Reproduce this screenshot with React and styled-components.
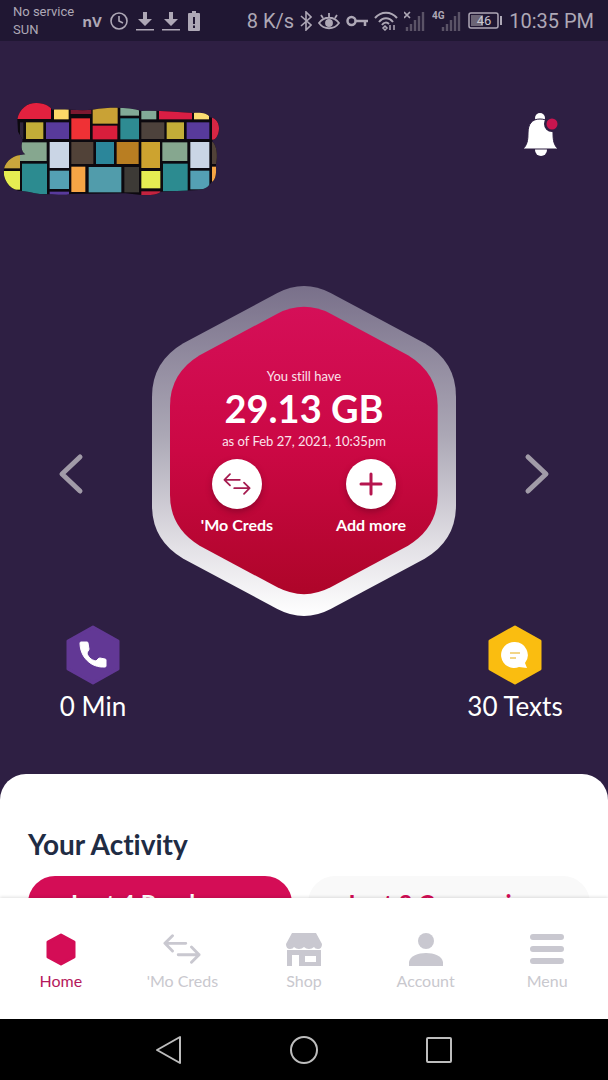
import styled, { createGlobalStyle } from "styled-components";

const GlobalStyle = createGlobalStyle`
  * {
    box-sizing: border-box;
  }

  body {
    margin: 0;
    background: #2e1f43;
    font-family: Lato, "Open Sans", sans-serif;
    font-variant-ligatures: none;
  }

  button {
    border: 0;
    padding: 0;
    background: none;
    color: inherit;
    font: inherit;
    cursor: pointer;
  }

  svg {
    display: block;
    flex-shrink: 0;
  }
`;

const Screen = styled.div`
  display: flex;
  flex-direction: column;
  height: 100vh;
`;

const StatusBar = styled.header`
  display: flex;
  align-items: center;
  justify-content: space-between;
  height: 41px;
  padding: 0 14px 0 13px;
  background: #201733;
  color: #aea8b6;
  font-family: Roboto, sans-serif;
  font-size: 20px;
  white-space: nowrap;
`;

const StatusGroup = styled.div`
  display: flex;
  align-items: center;
  gap: ${(props) => props.$gap}px;
`;

const Carrier = styled.div`
  font-size: 13px;
  line-height: 18px;
`;

const AppBadge = styled.span`
  font-family: "Open Sans", sans-serif;
  font-size: 15px;
  font-weight: 700;
`;

const Content = styled.main`
  flex: 1;
  min-height: 0;
  display: flex;
  flex-direction: column;
  overflow-y: auto;
  scrollbar-width: none;
`;

const TopBar = styled.div`
  display: flex;
  justify-content: space-between;
  align-items: flex-start;
  padding: 54px 48px 0 0;
`;

const BellButton = styled.button`
  margin-top: 16px;
`;

const Carousel = styled.section`
  display: flex;
  align-items: center;
  justify-content: space-between;
  padding: 86px 58px 0;
`;

const ArrowButton = styled.button`
  padding-top: 46px;
`;

const Balance = styled.div`
  display: grid;
  justify-items: center;

  > * {
    grid-area: 1 / 1;
  }
`;

const BalanceInfo = styled.div`
  display: flex;
  flex-direction: column;
  align-items: center;
  padding-top: 80px;
  color: #fff;
`;

const Caption = styled.div`
  font-size: 13px;
  line-height: 20px;
  color: #fbe3ec;
`;

const Amount = styled.div`
  font-size: 38px;
  font-weight: 700;
  line-height: 45px;
`;

const Actions = styled.div`
  display: grid;
  grid-template-columns: 134px 134px;
  margin-top: 8px;
`;

const Action = styled.button`
  display: flex;
  flex-direction: column;
  align-items: center;
  gap: 6px;
  font-size: 16px;
  font-weight: 700;
  line-height: 20px;
`;

const ActionCircle = styled.span`
  display: flex;
  align-items: center;
  justify-content: center;
  width: 50px;
  height: 50px;
  border-radius: 50%;
  background: #fff;
  box-shadow: 0 3px 6px rgba(80, 0, 30, 0.4);
`;

const Stats = styled.section`
  display: flex;
  justify-content: space-between;
  padding-top: 9px;
`;

const Stat = styled.div`
  display: flex;
  flex-direction: column;
  align-items: center;
  gap: 5px;
  width: 186px;
  color: #fff;
  font-size: 26px;
  line-height: 32px;
`;

const Sheet = styled.section`
  flex: 1 0 auto;
  margin-top: 52px;
  padding: 54px 18px 24px 28px;
  border-radius: 26px 26px 0 0;
  background: #fff;
`;

const SheetTitle = styled.h2`
  margin: 0;
  color: #1f2c44;
  font-size: 28px;
  font-weight: 700;
  line-height: 32px;
`;

const Pills = styled.div`
  display: flex;
  gap: 16px;
  margin-top: 16px;
`;

const Pill = styled.button`
  flex: ${(props) => (props.$active ? 264 : 282)};
  height: 54px;
  border-radius: 27px;
  background: ${(props) => (props.$active ? "#d40d56" : "#f9f9f9")};
  color: ${(props) => (props.$active ? "#fff" : "#d40d56")};
  font-size: 24px;
  font-weight: 700;
  white-space: nowrap;
`;

const TabBar = styled.nav`
  position: relative;
  display: grid;
  grid-template-columns: repeat(5, 1fr);
  height: 121px;
  padding-top: 34px;
  background: #fff;
  box-shadow: 0 -1px 3px rgba(0, 0, 0, 0.12);
`;

const Tab = styled.a`
  display: flex;
  flex-direction: column;
  align-items: center;
  gap: 5px;
  color: ${(props) => (props.$active ? "#b5195c" : "#c9c8ce")};
  font-size: 16px;
  line-height: 20px;
  text-decoration: none;
`;

const SystemBar = styled.footer`
  display: flex;
  align-items: center;
  justify-content: center;
  gap: 105px;
  height: 61px;
  background: #000;
`;

const tiles = [
  [50, 10, 103, 62, "#e3213f"],
  [162, 40, 44, 33, "#fbd968"],
  [212, 44, 62, 13, "#7c1830"],
  [278, 36, 75, 50, "#c9a235"],
  [361, 36, 56, 26, "#82aa97"],
  [424, 46, 45, 27, "#82aa97"],
  [477, 46, 99, 27, "#d91e44"],
  [582, 50, 45, 23, "#fbdc72"],
  [60, 82, 10, 50, "#30263a"],
  [78, 82, 52, 50, "#c2ad38"],
  [138, 82, 69, 50, "#583a9b"],
  [214, 70, 56, 63, "#ef3135"],
  [278, 92, 74, 41, "#d81e3c"],
  [361, 70, 56, 63, "#2e8b92"],
  [424, 82, 69, 50, "#4d423c"],
  [500, 82, 52, 50, "#c2ad38"],
  [560, 82, 68, 50, "#583a9b"],
  [636, 66, 24, 68, "#d82644"],
  [60, 142, 80, 56, "#86a78f"],
  [149, 141, 58, 78, "#cad5e5"],
  [214, 141, 66, 66, "#514238"],
  [288, 141, 54, 66, "#2b869a"],
  [350, 141, 66, 66, "#b97e22"],
  [424, 141, 56, 78, "#cda32f"],
  [487, 142, 75, 56, "#86a78f"],
  [571, 141, 57, 78, "#cad5e5"],
  [636, 141, 18, 66, "#514238"],
  [10, 180, 50, 40, "#c9a63d"],
  [10, 228, 50, 56, "#e6ed52"],
  [66, 206, 75, 92, "#2c8b90"],
  [149, 227, 58, 55, "#54a0b4"],
  [149, 290, 58, 12, "#583a9b"],
  [214, 215, 42, 76, "#f6a545"],
  [266, 216, 98, 76, "#519cab"],
  [373, 216, 44, 76, "#3d3a36"],
  [424, 228, 57, 52, "#e6ed52"],
  [424, 289, 57, 12, "#c3233f"],
  [489, 206, 74, 83, "#2c8b90"],
  [571, 227, 57, 56, "#54a0b4"],
  [636, 215, 14, 46, "#f6a545"],
];

const Mosaic = () => (
  <svg width="230" height="105" viewBox="0 0 690 315" role="img" aria-label="Logo">
    <clipPath id="mosaic-shape">
      <path d="M52 73C58 40 84 23 110 24C136 24 154 38 156 44C200 42 240 48 278 44C330 36 385 36 424 48C470 46 520 50 580 54C600 52 625 54 629 68C648 66 658 88 657 102C656 122 646 134 637 136V140C650 150 654 180 648 208V216C650 240 644 258 634 262C626 276 612 284 596 285L482 290C470 300 445 302 424 300L376 295L212 297C190 302 165 298 145 298C120 300 90 290 66 288C36 288 12 262 11 230C11 206 34 182 62 180L76 178C62 168 64 150 68 134L54 110Z" />
    </clipPath>
    <g clipPath="url(#mosaic-shape)">
      <rect width="690" height="315" fill="#0c090f" />
      {tiles.map(([x, y, width, height, fill]) => (
        <rect key={`${x}-${y}`} x={x} y={y} width={width} height={height} fill={fill} />
      ))}
    </g>
  </svg>
);

const BellIcon = () => (
  <svg width="40" height="46" viewBox="0 0 40 46">
    <ellipse cx="21" cy="39" rx="6" ry="6" fill="#fff" />
    <circle cx="20" cy="7" r="5" fill="#fff" />
    <path
      d="M3 38c4-4 5-8 5-16C8 13 12 8 20 8s13 5 13 14c0 8 1 12 5 16z"
      fill="#fff"
      stroke="#2e1f43"
      strokeWidth="1"
    />
    <circle cx="32" cy="13" r="8" fill="#2e1f43" />
    <circle cx="32" cy="13" r="5.500" fill="#c8154f" />
  </svg>
);

const BalanceHexagon = () => (
  <svg width="304" height="330" viewBox="22 18 912 990">
    <defs>
      <linearGradient id="rim" x1="0" y1="0" x2="0" y2="1">
        <stop offset="0" stopColor="#79708a" />
        <stop offset="0.45" stopColor="#aba7b5" />
        <stop offset="0.8" stopColor="#e4e2e7" />
        <stop offset="1" stopColor="#fff" />
      </linearGradient>
      <linearGradient id="core" x1="0" y1="0" x2="0" y2="1">
        <stop offset="0" stopColor="#d50f58" />
        <stop offset="0.5" stopColor="#cb0844" />
        <stop offset="1" stopColor="#ae0529" />
      </linearGradient>
    </defs>
    <path
      d="M398 39Q478-3 558 39L840 190Q934 245 934 350V676Q934 781 840 836L558 987Q478 1029 398 987L116 836Q22 781 22 676V350Q22 245 116 190Z"
      fill="url(#rim)"
    />
    <path
      d="M398 101Q478 60 558 101L790 226Q879 280 879 378V645Q879 743 790 797L558 922Q478 963 398 922L165 797Q76 743 76 645V378Q76 280 165 226Z"
      fill="url(#core)"
    />
  </svg>
);

const Chevron = ({ right }) => (
  <svg width="26" height="42" viewBox="0 0 26 42" fill="none" stroke="#a19ba8" strokeWidth="5" strokeLinecap="round" strokeLinejoin="round">
    <path d={right ? "M4 4L22 21L4 38" : "M22 4L4 21L22 38"} />
  </svg>
);

const SwapIcon = ({ width, height, color, strokeWidth }) => (
  <svg width={width} height={height} viewBox="-1 -1 40 32" fill="none" stroke={color} strokeWidth={strokeWidth} strokeLinecap="round" strokeLinejoin="round">
    <path d="M23 9H1M9 1L1 9L9 17M15 21H37M29 13L37 21L29 29" />
  </svg>
);

const PlusIcon = () => (
  <svg width="24" height="24" viewBox="0 0 24 24" stroke="#b5154e" strokeWidth="3" strokeLinecap="round">
    <path d="M12 2V22M2 12H22" />
  </svg>
);

const MinutesIcon = () => (
  <svg width="54" height="60" viewBox="0 0 54 60">
    <path d="M27 2L52 16V44L27 58L2 44V16Z" fill="#623895" stroke="#623895" strokeWidth="3" strokeLinejoin="round" />
    <path
      d="M15 17H21Q22 17 22 18L23 24Q23 25 22 26L21 28C22 32 25 35 30 36L32 34Q33 33 34 33L39 34Q40 34 40 35V41Q40 42 39 42C25 43 14 32 14 18Q14 17 15 17Z"
      fill="#fff"
      stroke="#fff"
      strokeWidth="1"
    />
  </svg>
);

const TextsIcon = () => (
  <svg width="54" height="60" viewBox="0 0 54 60">
    <path d="M27 2L52 16V44L27 58L2 44V16Z" fill="#fabd10" stroke="#fabd10" strokeWidth="3" strokeLinejoin="round" />
    <path d="M27 17A13 13 0 1 0 31 42L39 43L37 38A13 13 0 0 0 27 17Z" fill="#fff" />
    <path d="M22 28H32M22 33H28" stroke="#eec75f" strokeWidth="1.6" />
  </svg>
);

const HomeIcon = () => (
  <svg width="38" height="34" viewBox="0 0 38 34">
    <path d="M19 3L32 10V25L19 32L6 25V10Z" fill="#d40d56" stroke="#d40d56" strokeWidth="3" strokeLinejoin="round" />
  </svg>
);

const ShopIcon = () => (
  <svg width="38" height="34" viewBox="0 0 38 34" fill="#c9c8d0">
    <path d="M7 1H31L37 12Q37 17 33 17Q30 17 29 15Q27 17 24 17Q21 17 19 15Q17 17 14 17Q11 17 9 15Q8 17 5 17Q1 17 1 12Z" />
    <path fillRule="evenodd" d="M2 18H36V34H14V23H7V34H2ZM20 24V30H31V24Z" />
  </svg>
);

const AccountIcon = () => (
  <svg width="38" height="34" viewBox="0 0 38 34" fill="#c9c8d0">
    <circle cx="19" cy="9" r="8" />
    <path d="M2 34V30C4 18 34 18 36 30V34Z" />
  </svg>
);

const MenuIcon = () => (
  <svg width="38" height="34" viewBox="0 0 38 34" stroke="#c9c8d0" strokeWidth="6" strokeLinecap="round">
    <path d="M5 5H33M5 17H33M5 29H33" />
  </svg>
);

const ClockIcon = () => (
  <svg width="18" height="18" viewBox="0 0 18 18" fill="none" stroke="currentColor" strokeWidth="1.6">
    <circle cx="9" cy="9" r="8" />
    <path d="M9 4V9L13 11" />
  </svg>
);

const DownloadIcon = () => (
  <svg width="18" height="20" viewBox="0 0 18 20" fill="currentColor">
    <path d="M7 1H11V8H16L9 15L2 8H7ZM0 18H18V19.500H0Z" />
  </svg>
);

const LowBatteryIcon = () => (
  <svg width="12" height="20" viewBox="0 0 12 20">
    <path d="M4 0H8V2H11Q12 2 12 3V19Q12 20 11 20H1Q0 20 0 19V3Q0 2 1 2H4Z" fill="currentColor" />
    <path d="M6 6V13M6 14.500V17" stroke="#201733" strokeWidth="2" />
  </svg>
);

const BluetoothIcon = () => (
  <svg width="12" height="20" viewBox="1 0 12 20" fill="none" stroke="currentColor" strokeWidth="1.600">
    <path d="M2 5L12 14L7 19V1L12 6L2 15" />
  </svg>
);

const EyeIcon = () => (
  <svg width="22" height="18" viewBox="0 0 22 18" fill="none" stroke="currentColor" strokeWidth="1.800">
    <path d="M1 11C6 4 16 4 21 11C16 18 6 18 1 11ZM11 5V1M5 6L3 3M17 6L19 3" />
    <circle cx="11" cy="11" r="3" fill="currentColor" />
  </svg>
);

const KeyIcon = () => (
  <svg width="22" height="14" viewBox="1 0 22 14" fill="none" stroke="currentColor" strokeWidth="2.500">
    <circle cx="6.500" cy="7" r="4" />
    <path d="M11 7H23M20 7V12" />
  </svg>
);

const WifiIcon = () => (
  <svg width="24" height="20" viewBox="0 0 24 20" fill="none" stroke="currentColor" strokeWidth="2">
    <path d="M1 7C7 0 17 0 23 7M5 11C9 6 15 6 19 11M8 14C10 11 13 11 15 13" />
    <path d="M11 15L13 17L11 19L9 17ZM16 14V19M20 14V19" strokeWidth="1.500" />
  </svg>
);

const SignalIcon = ({ children }) => (
  <svg width={children ? 30 : 22} height="20" viewBox={children ? "-8 0 30 20" : "0 0 22 20"}>
    <path d="M3 20V16M7 20V13M11 20V9M15 20V5M19 20V1" stroke="#5b5367" strokeWidth="2.400" />
    {children ? (
      <text x="-8" y="8" fill="currentColor" fontSize="10" fontWeight="700">
        {children}
      </text>
    ) : (
      <path d="M0 1L6 7M6 1L0 7" stroke="currentColor" strokeWidth="1.600" />
    )}
  </svg>
);

const BatteryIcon = () => (
  <svg width="35" height="17" viewBox="0 0 35 17">
    <rect x="1" y="1" width="29" height="15" rx="2" fill="none" stroke="currentColor" strokeWidth="1.500" />
    <rect x="3" y="3" width="12" height="11" fill="#6c6576" />
    <path d="M33 4V13" stroke="currentColor" strokeWidth="2" />
    <text x="16" y="13" textAnchor="middle" fill="#c9c5ce" fontSize="13">
      46
    </text>
  </svg>
);

const tabs = [
  { label: "Home", icon: <HomeIcon />, active: true },
  { label: "'Mo Creds", icon: <SwapIcon width={38} height={34} color="#c9c8d0" strokeWidth={3} /> },
  { label: "Shop", icon: <ShopIcon /> },
  { label: "Account", icon: <AccountIcon /> },
  { label: "Menu", icon: <MenuIcon /> },
];

export default function App() {
  return (
    <>
      <GlobalStyle />
      <Screen>
        <StatusBar>
          <StatusGroup $gap={8}>
            <Carrier>
              No service
              <br />
              SUN
            </Carrier>
            <AppBadge>nV</AppBadge>
            <ClockIcon />
            <DownloadIcon />
            <DownloadIcon />
            <LowBatteryIcon />
          </StatusGroup>
          <StatusGroup $gap={6}>
            <span>8 K/s</span>
            <BluetoothIcon />
            <EyeIcon />
            <KeyIcon />
            <WifiIcon />
            <SignalIcon />
            <SignalIcon>4G</SignalIcon>
            <BatteryIcon />
            <span>10:35 PM</span>
          </StatusGroup>
        </StatusBar>

        <Content>
          <TopBar>
            <Mosaic />
            <BellButton aria-label="Notifications">
              <BellIcon />
            </BellButton>
          </TopBar>

          <Carousel>
            <ArrowButton aria-label="Previous">
              <Chevron />
            </ArrowButton>
            <Balance>
              <BalanceHexagon />
              <BalanceInfo>
                <Caption>You still have</Caption>
                <Amount>29.13 GB</Amount>
                <Caption>as of Feb 27, 2021, 10:35pm</Caption>
                <Actions>
                  <Action>
                    <ActionCircle>
                      <SwapIcon width={28} height={24} color="#a51c50" strokeWidth={2.5} />
                    </ActionCircle>
                    'Mo Creds
                  </Action>
                  <Action>
                    <ActionCircle>
                      <PlusIcon />
                    </ActionCircle>
                    Add more
                  </Action>
                </Actions>
              </BalanceInfo>
            </Balance>
            <ArrowButton aria-label="Next">
              <Chevron right />
            </ArrowButton>
          </Carousel>

          <Stats>
            <Stat>
              <MinutesIcon />
              0 Min
            </Stat>
            <Stat>
              <TextsIcon />
              30 Texts
            </Stat>
          </Stats>

          <Sheet>
            <SheetTitle>Your Activity</SheetTitle>
            <Pills>
              <Pill $active>Last 4 Purchases</Pill>
              <Pill>Last 3 Conversions</Pill>
            </Pills>
          </Sheet>
        </Content>

        <TabBar>
          {tabs.map((tab) => (
            <Tab key={tab.label} href="#" $active={tab.active}>
              {tab.icon}
              {tab.label}
            </Tab>
          ))}
        </TabBar>

        <SystemBar>
          <button aria-label="Back">
            <svg width="30" height="30" viewBox="0 0 30 30" fill="none" stroke="#bdbdbd" strokeWidth="2" strokeLinejoin="round">
              <path d="M26 2V28L3 15Z" />
            </svg>
          </button>
          <button aria-label="Home screen">
            <svg width="30" height="30" viewBox="0 0 30 30" fill="none" stroke="#bdbdbd" strokeWidth="2">
              <circle cx="15" cy="15" r="13" />
            </svg>
          </button>
          <button aria-label="Recent apps">
            <svg width="30" height="30" viewBox="0 0 30 30" fill="none" stroke="#bdbdbd" strokeWidth="2">
              <rect x="3" y="3" width="24" height="24" rx="1" />
            </svg>
          </button>
        </SystemBar>
      </Screen>
    </>
  );
}
